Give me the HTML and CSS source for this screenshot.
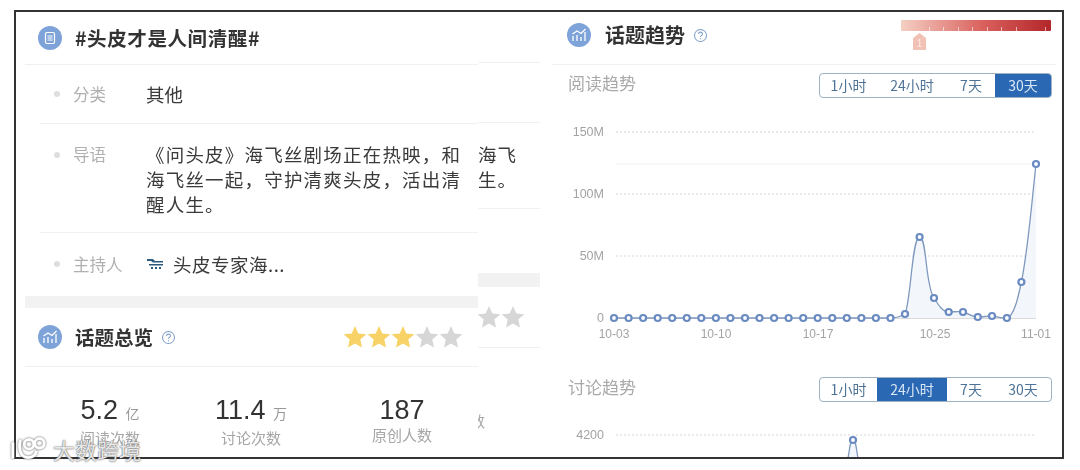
FILE: index.html
```html
<!DOCTYPE html>
<html lang="zh-CN">
<head>
    <meta charset="UTF-8">
    <meta name="viewport" content="width=device-width, initial-scale=1.0">
    <title>话题趋势</title>
    <link rel="stylesheet" href="styles.css">
</head>
<body>
    <svg class="defs">
        <symbol id="star" viewBox="0 0 24 24"><path d="M12 1l3.3 7.4 8 .8-6 5.4 1.7 7.9-7-4.1-7 4.1 1.7-7.9-6-5.4 8-.8z"/></symbol>
        <symbol id="help" viewBox="0 0 16 16">
            <circle cx="8" cy="8" r="6.4" fill="none" stroke="#7f9fc9" stroke-width="1.1"/>
            <path d="M5.9 6.4c0-1.3 1-2 2.1-2s2.1.7 2.1 1.9c0 1.6-2.1 1.6-2.1 3.2M8 11v.9" fill="none" stroke="#7f9fc9" stroke-width="1.1"/>
        </symbol>
        <symbol id="trend" viewBox="0 0 24 24">
            <circle cx="12" cy="12" r="12" fill="#7ea3d8"/>
            <path d="M6 18v-5M10 18v-6M14 18v-4M18 18V9M5.500 11l4.500-3 4 2.500L18.500 6" fill="none" stroke="#fff" stroke-width="1.300"/>
        </symbol>
    </svg>

    <div class="frame">
        <!-- 左侧：话题信息 -->
        <div class="left">
            <div class="sheet">
                <div class="head head-topic">
                    <svg class="head-icon" viewBox="0 0 24 24">
                        <circle cx="12" cy="12" r="12" fill="#7ea3d8"/>
                        <rect x="7.500" y="6.500" width="9" height="11" rx="1.500" fill="none" stroke="#fff" stroke-width="1.200"/>
                        <path d="M9.500 10h5M9.500 12h5M9.500 14h5" stroke="#fff" stroke-width="1"/>
                    </svg>
                    <h2 class="title">#头皮才是人间清醒#</h2>
                </div>
                <div class="row row-type">
                    <span class="dot"></span>
                    <span class="label">分类</span>
                    <span class="value">其他</span>
                </div>
                <div class="row row-intro">
                    <span class="dot"></span>
                    <span class="label">导语</span>
                    <p class="value">《问头皮》海飞丝剧场正在热映，和海飞丝一起，守护清爽头皮，活出清醒人生。</p>
                </div>
                <div class="row row-host">
                    <span class="dot"></span>
                    <span class="label">主持人</span>
                    <svg class="avatar" viewBox="0 0 18 12">
                        <path d="M1 1h6l2 2h8v1.500H7L5 3H1zM3 6h14v1.500H3zM5 9h2v2H5zM9 9h2v2H9zM13 9h2v2h-2z" fill="#2f5a80"/>
                    </svg>
                    <span class="value">头皮专家海...</span>
                </div>
                <div class="band"></div>
                <div class="head head-overview">
                    <svg class="head-icon"><use href="#trend"/></svg>
                    <h2 class="title">话题总览</h2>
                    <svg class="help"><use href="#help"/></svg>
                    <div class="stars">
                        <svg class="star star-on"><use href="#star"/></svg>
                        <svg class="star star-on"><use href="#star"/></svg>
                        <svg class="star star-on"><use href="#star"/></svg>
                        <svg class="star"><use href="#star"/></svg>
                        <svg class="star"><use href="#star"/></svg>
                    </div>
                </div>
                <div class="stats">
                    <div class="stat"><div class="stat-value">5.2 <small>亿</small></div><div class="stat-label">阅读次数</div></div>
                    <div class="stat"><div class="stat-value">11.4 <small>万</small></div><div class="stat-label">讨论次数</div></div>
                    <div class="stat"><div class="stat-value">187</div><div class="stat-label">原创人数</div></div>
                </div>
            </div>

            <!-- 后面露出来的一页 -->
            <div class="behind">
                <div class="behind-line behind-first"></div>
                <div class="behind-line behind-second"></div>
                <p class="behind-text">海飞<br>生。</p>
                <div class="behind-line behind-third"></div>
                <div class="behind-band"></div>
                <div class="behind-stars">
                    <svg class="star"><use href="#star"/></svg>
                    <svg class="star"><use href="#star"/></svg>
                </div>
                <div class="behind-line behind-fourth"></div>
                <div class="behind-char">数</div>
            </div>
        </div>

        <!-- 右侧：话题趋势 -->
        <div class="right">
            <div class="head head-trend">
                <svg class="head-icon"><use href="#trend"/></svg>
                <h2 class="title">话题趋势</h2>
                <svg class="help"><use href="#help"/></svg>
                <div class="heat">
                    <div class="heat-bar"></div>
                    <div class="heat-mark">1</div>
                </div>
            </div>

            <div class="trend-head trend-read">
                <h3>阅读趋势</h3>
                <div class="seg">
                    <span class="seg-a">1小时</span>
                    <span class="seg-b">24小时</span>
                    <span class="seg-c">7天</span>
                    <span class="seg-d active">30天</span>
                </div>
            </div>

            <svg class="chart chart-read" viewBox="552 110 510 235">
                <g class="grid">
                    <path d="M616 132H1036M616 194H1036M616 256H1036"/>
                </g>
                <path class="solid" d="M616 164H1036"/>
                <path class="base" d="M616 318.500H1036"/>
                <path class="area" d="M614 318H890C896 318 900 317 905 314C911 300 912 237 919.600 237C927 237 925 285 934 298C939 306 943 312 948.700 312C954 312 958 311 963 312C968 313 972 317 977.800 317C983 317 987 316 992 316C997 316 1001 319 1006.900 318C1014 316 1018 298 1021.400 282C1028 250 1032 200 1036 164V318Z"/>
                <path class="line" d="M614 318H890C896 318 900 317 905 314C911 300 912 237 919.600 237C927 237 925 285 934 298C939 306 943 312 948.700 312C954 312 958 311 963 312C968 313 972 317 977.800 317C983 317 987 316 992 316C997 316 1001 319 1006.900 318C1014 316 1018 298 1021.400 282C1028 250 1032 200 1036 164"/>
                <g class="points">
                    <circle cx="614" cy="318" r="3"/><circle cx="628.600" cy="318" r="3"/><circle cx="643.100" cy="318" r="3"/><circle cx="657.700" cy="318" r="3"/><circle cx="672.200" cy="318" r="3"/>
                    <circle cx="686.800" cy="318" r="3"/><circle cx="701.300" cy="318" r="3"/><circle cx="715.900" cy="318" r="3"/><circle cx="730.400" cy="318" r="3"/><circle cx="745" cy="318" r="3"/>
                    <circle cx="759.500" cy="318" r="3"/><circle cx="774.100" cy="318" r="3"/><circle cx="788.600" cy="318" r="3"/><circle cx="803.200" cy="318" r="3"/><circle cx="817.700" cy="318" r="3"/>
                    <circle cx="832.300" cy="318" r="3"/><circle cx="846.800" cy="318" r="3"/><circle cx="861.400" cy="318" r="3"/><circle cx="875.900" cy="318" r="3"/><circle cx="890.500" cy="318" r="3"/>
                    <circle cx="905" cy="314" r="3"/><circle cx="919.600" cy="237" r="3"/><circle cx="934" cy="298" r="3"/><circle cx="948.700" cy="312" r="3"/><circle cx="963" cy="312" r="3"/>
                    <circle cx="977.800" cy="317" r="3"/><circle cx="992" cy="316" r="3"/><circle cx="1006.900" cy="318" r="3"/><circle cx="1021.400" cy="282" r="3"/><circle cx="1036" cy="164" r="3"/>
                </g>
                <g class="y-labels">
                    <text x="604" y="136">150M</text>
                    <text x="604" y="198">100M</text>
                    <text x="604" y="260">50M</text>
                    <text x="604" y="322">0</text>
                </g>
                <g class="x-labels">
                    <text x="614" y="338">10-03</text>
                    <text x="716" y="338">10-10</text>
                    <text x="818" y="338">10-17</text>
                    <text x="935" y="338">10-25</text>
                    <text x="1036" y="338">11-01</text>
                </g>
            </svg>

            <div class="trend-head trend-talk">
                <h3>讨论趋势</h3>
                <div class="seg">
                    <span class="seg-a">1小时</span>
                    <span class="seg-b active">24小时</span>
                    <span class="seg-c">7天</span>
                    <span class="seg-d">30天</span>
                </div>
            </div>

            <svg class="chart chart-talk" viewBox="552 420 510 38">
                <g class="grid"><path d="M616 435H1036"/></g>
                <path class="area" d="M848 458C850 448 850 440 853 440C856 440 856 448 858 458Z"/>
                <path class="line" d="M848 458C850 448 850 440 853 440C856 440 856 448 858 458"/>
                <g class="points"><circle cx="853" cy="440" r="3"/></g>
                <g class="y-labels"><text x="604" y="439">4200</text></g>
            </svg>
        </div>
    </div>

    <!-- 水印 -->
    <div class="watermark">
        <svg class="watermark-logo" viewBox="0 0 42 26">
            <path d="M4 6v17M12 3c-2 8-1 19 8 19 5 0 8-3 9-7"/>
            <circle cx="21" cy="8" r="5"/>
            <circle cx="32" cy="7" r="5"/>
        </svg>
        <span>大数跨境</span>
    </div>
</body>
</html>
```

FILE: styles.css
```css
* {
    margin: 0;
    padding: 0;
    box-sizing: border-box;
}

body {
    position: relative;
    height: 470px;
    overflow: hidden;
    background: white;
    font-family: "Noto Sans CJK SC", "Liberation Sans", sans-serif;
    color: #333;
}

.defs {
    display: none;
}

/* 原图是压缩过的截图，整体有点糊 */
.frame {
    display: flex;
    width: 1050px;
    height: 449px;
    margin: 10px 0 0 14px;
    border: 2px solid #333;
    overflow: hidden;
    background: white;
    filter: blur(0.35px);
}

.left {
    display: flex;
    width: 524px;
    padding-left: 9px;
    flex-shrink: 0;
}

.sheet {
    position: relative;
    z-index: 1;
    width: 453px;
    flex-shrink: 0;
    background: white;
}

.head {
    display: flex;
    align-items: center;
    height: 53px;
    padding-left: 13px;
    border-bottom: 1px solid #f0f0f0;
}

.head-topic {
    padding-bottom: 1px;
}

.head-topic .title {
    letter-spacing: 0.600px;
}

.head-icon {
    width: 24px;
    height: 24px;
    margin-right: 13px;
    flex-shrink: 0;
}

.title {
    font-size: 19.500px;
    font-weight: 700;
    line-height: 1;
    color: #333;
}

.help {
    width: 15px;
    height: 15px;
    margin-left: 8px;
}

.row {
    display: flex;
    margin-left: 15px;
    padding-left: 14px;
    border-bottom: 1px solid #f0f0f0;
}

.row-type {
    align-items: center;
    height: 59px;
}

.row-intro {
    height: 109px;
    padding-top: 18px;
}

.row-host {
    align-items: center;
    height: 62px;
    border-bottom: none;
}

.dot {
    width: 6px;
    height: 6px;
    margin: 0 13px 0 0;
    border-radius: 50%;
    background: #dedede;
    flex-shrink: 0;
}

.row-intro .dot {
    margin-top: 10px;
}

.label {
    width: 73px;
    font-size: 16.500px;
    line-height: 25px;
    color: #b0b0b0;
    flex-shrink: 0;
}

.value {
    font-size: 18.500px;
    line-height: 25px;
    color: #3a3a3a;
}

.row-intro .value {
    width: 318px;
    letter-spacing: 1.200px;
}

.avatar {
    width: 18px;
    height: 12px;
    margin-right: 9px;
}

.row-host .value {
    letter-spacing: 0.500px;
}

.band {
    height: 12px;
    margin-top: 1px;
    background: #f2f2f2;
}

.head-overview {
    height: 59px;
}

.stars {
    display: flex;
    margin-left: auto;
    margin-right: 15px;
}

.star {
    width: 24px;
    height: 24px;
    fill: #d6d6d6;
}

.star-on {
    fill: #f6d267;
}

.stats {
    display: grid;
    grid-template-columns: 130px 152px 150px;
    padding: 27px 0 0 20px;
    text-align: center;
}

.stat-value {
    font-family: "Liberation Sans", sans-serif;
    font-size: 27px;
    line-height: 32px;
    color: #333;
}

.stat-value small {
    font-family: "Noto Sans CJK SC", sans-serif;
    font-size: 14px;
    color: #999;
}

.stat-label {
    margin-top: -2px;
    font-size: 15px;
    line-height: 22px;
    color: #a6a6a6;
}

.behind {
    width: 62px;
    flex-shrink: 0;
}

.behind-line {
    height: 1px;
    background: #f0f0f0;
}

.behind-first {
    margin-top: 50px;
}

.behind-second {
    margin-top: 59px;
}

.behind-text {
    margin-top: 19px;
    font-size: 18.500px;
    line-height: 25px;
    letter-spacing: 1px;
    color: #3a3a3a;
}

.behind-third {
    margin-top: 16px;
}

.behind-band {
    height: 14px;
    margin-top: 64px;
    background: #f2f2f2;
}

.behind-stars {
    display: flex;
    margin: 18px 0 0 -1px;
}

.behind-line.behind-fourth {
    margin-top: 18px;
}

.behind-char {
    margin: 62px 0 0 -8px;
    font-size: 15px;
    line-height: 22px;
    color: #a6a6a6;
}

.right {
    flex: 1;
    min-width: 0;
    padding: 0 6px 0 12px;
}

.head-trend {
    height: 53px;
    padding: 0 0 6px 15px;
    border-bottom: 1px solid #f0f0f0;
}

.head-trend .title {
    font-size: 20px;
}

.head-trend .head-icon {
    margin-right: 14px;
}

.heat {
    align-self: flex-start;
    margin-left: auto;
    padding: 8px 5px 0 0;
}

.heat-bar {
    width: 150px;
    height: 11px;
    border-radius: 1px;
    background:
        repeating-linear-gradient(90deg, transparent 0 13.500px, rgba(255,255,255,0.6) 13.500px 14.500px) 0 100% / 100% 4px no-repeat,
        linear-gradient(90deg, #f5cfc3 0%, #d9605c 55%, #b3262a 100%);
}

.heat-mark {
    width: 13px;
    height: 17px;
    margin: 2px 0 0 12px;
    padding-top: 4px;
    clip-path: polygon(50% 0, 100% 30%, 100% 100%, 0 100%, 0 30%);
    background: #f0c1b4;
    font-family: "Liberation Sans", sans-serif;
    font-size: 10px;
    line-height: 13px;
    text-align: center;
    color: #fbe9e4;
}

.trend-head {
    display: flex;
    align-items: center;
    justify-content: space-between;
    height: 25px;
    padding: 0 4px 0 16px;
}

.trend-read {
    margin-top: 8px;
}

.trend-talk {
    margin-top: 32px;
}

.trend-head h3 {
    margin-bottom: 6px;
    font-size: 17px;
    font-weight: 400;
    color: #a9a9a9;
}

.seg {
    display: flex;
    height: 25px;
    border: 1px solid #9fb2c4;
    border-radius: 4px;
    overflow: hidden;
    font-size: 14px;
    line-height: 23px;
    text-align: center;
    color: #4f7396;
}

.seg-a {
    width: 57px;
}

.seg-b {
    width: 70px;
}

.seg-c {
    width: 48px;
}

.seg-d {
    width: 56px;
}

.seg .active {
    background: #2a68b4;
    color: #d9e6f5;
}

.chart {
    display: block;
    width: 510px;
    font-family: "Liberation Sans", sans-serif;
}

.chart-read {
    height: 235px;
    margin-top: 12px;
}

.chart-talk {
    height: 38px;
    margin-top: 18px;
}

.grid path {
    fill: none;
    stroke: #d5d5d5;
    stroke-width: 1;
    stroke-dasharray: 2 2;
}

.solid {
    fill: none;
    stroke: #f3f3f3;
}

.base {
    fill: none;
    stroke: #d9d9d9;
}

.area {
    fill: #f3f7fc;
}

.line {
    fill: none;
    stroke: #7f98bd;
    stroke-width: 1.300;
}

.points circle {
    fill: #fff;
    stroke: #6a8bc2;
    stroke-width: 2.200;
}

.y-labels text {
    font-size: 12.500px;
    text-anchor: end;
    fill: #a3a3a3;
}

.x-labels text {
    font-size: 12px;
    text-anchor: middle;
    fill: #a3a3a3;
}

/* 水印压在边框上面 */
.watermark {
    position: absolute;
    left: 9px;
    top: 434px;
    display: flex;
    align-items: center;
    gap: 4px;
    font-size: 22px;
    line-height: 30px;
    color: rgba(255,255,255,0.85);
    text-shadow: 0 0 2px #666, 0 0 1px #666;
}

.watermark-logo {
    width: 40px;
    height: 26px;
    fill: none;
    stroke: #fff;
    stroke-width: 3;
    filter: drop-shadow(0 0 1px #555);
}
```
